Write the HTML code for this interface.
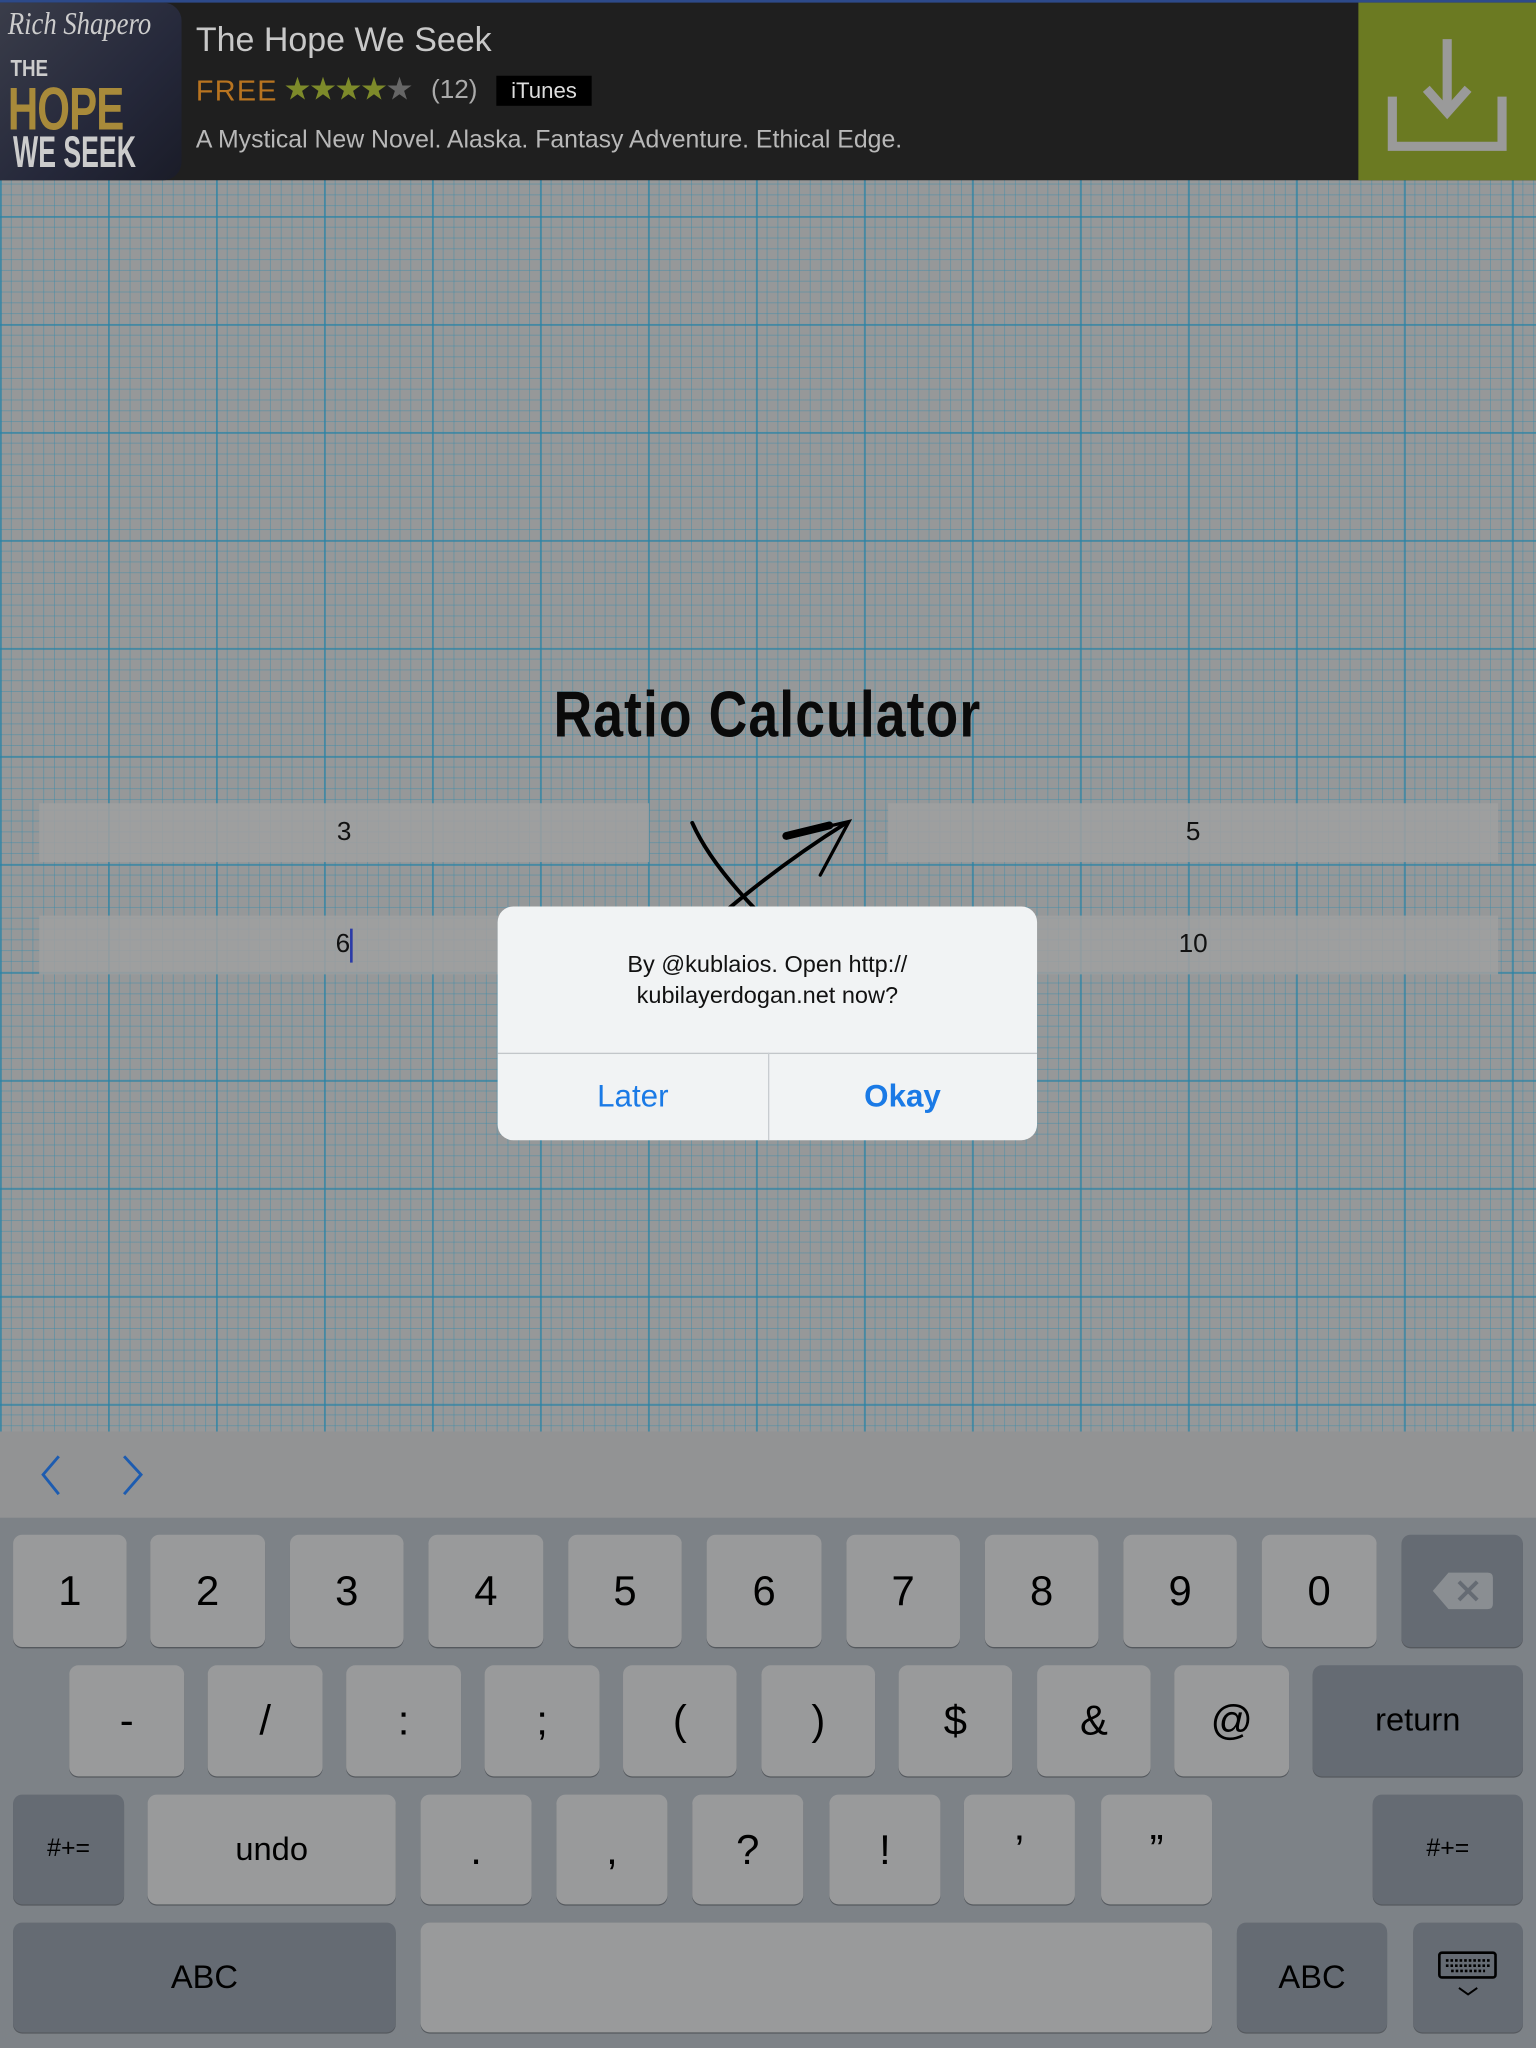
<!DOCTYPE html>
<html><head><meta charset="utf-8"><style>
html,body{margin:0;padding:0;width:1536px;height:2048px;overflow:hidden;background:#979797;font-family:"Liberation Sans",sans-serif}
#grid{position:absolute;left:0;top:0;width:1536px;height:1432px;
background-color:#969899;
background-image:
linear-gradient(to right,rgba(40,130,165,.6) 2px,transparent 2px),
linear-gradient(to bottom,rgba(40,130,165,.6) 2px,transparent 2px),
linear-gradient(to right,rgba(60,140,170,.45) 1px,transparent 1px),
linear-gradient(to bottom,rgba(60,140,170,.45) 1px,transparent 1px);
background-size:108px 108px,108px 108px,10.8px 10.8px,10.8px 10.8px;}
#s{position:absolute;left:0;top:0;width:1176px;height:1568px;transform:scale(1.306122);transform-origin:0 0}
.a{position:absolute}
.k{position:absolute;background:#999a9b;border-radius:7px;box-shadow:0 1px 0 #55595e;color:#000;display:flex;align-items:center;justify-content:center;font-size:32px}
.d{background:#656b73}
.inp{position:absolute;background:rgba(160,160,160,.85);text-align:center;font-size:20px;line-height:45px;color:#111}
</style></head><body>
<div id="grid"></div>
<div id="s">
<div class="a" style="left:0;top:0;width:1176px;height:138px;background:#1f1f1f;border-top:2px solid #2d4a8a;box-sizing:border-box"></div>
<div class="a" style="left:0;top:2px;width:139px;height:136px;background:linear-gradient(135deg,#3a3d4a,#25283a 60%,#1a1c28);border-radius:0 14px 14px 0;overflow:hidden">
<div class="a" style="left:6px;top:4px;font:italic 24px 'Liberation Serif',serif;color:#ccc;transform:scaleX(.85);transform-origin:0 0;white-space:nowrap">Rich Shapero</div>
<div class="a" style="left:8px;top:40px;font:bold 18px 'Liberation Sans';color:#ccc;transform:scaleX(.8);transform-origin:0 0">THE</div>
<div class="a" style="left:6px;top:54px;font:bold 46px 'Liberation Sans';color:#a88a3a;transform:scaleX(.7);transform-origin:0 0;letter-spacing:-1px;white-space:nowrap">HOPE</div>
<div class="a" style="left:10px;top:96px;font:bold 34px 'Liberation Sans';color:#ccc;transform:scaleX(.6);transform-origin:0 0;white-space:nowrap">WE SEEK</div>
</div>
<div class="a" style="left:150px;top:15px;font-size:26px;color:#c8c8c8">The Hope We Seek</div>
<div class="a" style="left:150px;top:57px;font-size:22px;color:#b87420;letter-spacing:1px">FREE</div>
<div class="a" style="left:217px;top:54px;font-size:24px;color:#7d8a2a;letter-spacing:-2px">★★★★<span style="color:#666">★</span></div>
<div class="a" style="left:330px;top:58px;font-size:20px;color:#aaa">(12)</div>
<div class="a" style="left:380px;top:58px;width:73px;height:23px;background:#000;color:#ddd;font-size:17px;text-align:center;line-height:23px">iTunes</div>
<div class="a" style="left:150px;top:97px;font-size:19px;color:#b8b8b8">A Mystical New Novel. Alaska. Fantasy Adventure. Ethical Edge.</div>
<div class="a" style="left:1040px;top:2px;width:136px;height:136px;background:#6b7a22">
<svg width="136" height="136" viewBox="0 0 136 136"><g fill="none" stroke="#9a9a9a" stroke-width="7"><path d="M68 28V80"/><path d="M52 66L68 84L84 66"/><path d="M26 72V110H110V72"/></g></svg></div>
<div class="a" style="left:380px;top:518px;width:415px;text-align:center;font:bold 50px 'Liberation Sans',sans-serif;color:#0a0a0a;transform:scaleX(.82);letter-spacing:1px">Ratio Calculator</div>
<div class="inp" style="left:30px;top:615px;width:467px">3</div>
<div class="inp" style="left:680px;top:615px;width:467px">5</div>
<div class="inp" style="left:30px;top:701px;width:467px">6<span style="display:inline-block;width:2px;height:26px;background:#2a3aa8;vertical-align:middle"></span></div>
<div class="inp" style="left:680px;top:701px;width:467px">10</div>
<svg class="a" style="left:520px;top:620px" width="140" height="120" viewBox="0 0 140 120"><g fill="none" stroke="#000" stroke-linecap="round"><path d="M10 10Q30 55 100 115" stroke-width="3"/><path d="M35 78Q80 40 128 10" stroke-width="3"/><path d="M82 20L130 9L108 50" stroke-width="2.5"/><path d="M82 20L115 12" stroke-width="6"/></g></svg>
<div class="a" style="left:381px;top:694px;width:413px;height:179px;background:#f1f3f4;border-radius:12px;overflow:hidden">
<div class="a" style="left:0;top:32px;width:413px;text-align:center;font-size:18px;line-height:24px;color:#111">By @kublaios. Open http://<br>kubilayerdogan.net now?</div>
<div class="a" style="left:0;top:112px;width:413px;height:1px;background:#c2c6c9"></div>
<div class="a" style="left:207px;top:112px;width:1px;height:67px;background:#c8ccd0"></div>
<div class="a" style="left:0;top:132px;width:207px;text-align:center;font-size:24px;color:#1a7ae6">Later</div>
<div class="a" style="left:207px;top:132px;width:206px;text-align:center;font-size:24px;font-weight:bold;color:#1a7ae6">Okay</div>
</div>
<div class="a" style="left:0;top:1096px;width:1176px;height:66px;background:#929394"></div>
<svg class="a" style="left:25px;top:1110px" width="100" height="40"><g fill="none" stroke="#1d5cb0" stroke-width="2.2"><path d="M20 5L8 19L20 34"/><path d="M70 5L83 19L70 34"/></g></svg>
<div class="a" style="left:0;top:1162px;width:1176px;height:406px;background:#7d8287"></div>
<div class="k" style="left:10px;top:1175px;width:87px;height:86px">1</div>
<div class="k" style="left:115px;top:1175px;width:88px;height:86px">2</div>
<div class="k" style="left:222px;top:1175px;width:87px;height:86px">3</div>
<div class="k" style="left:328px;top:1175px;width:88px;height:86px">4</div>
<div class="k" style="left:435px;top:1175px;width:87px;height:86px">5</div>
<div class="k" style="left:541px;top:1175px;width:88px;height:86px">6</div>
<div class="k" style="left:648px;top:1175px;width:87px;height:86px">7</div>
<div class="k" style="left:754px;top:1175px;width:87px;height:86px">8</div>
<div class="k" style="left:860px;top:1175px;width:87px;height:86px">9</div>
<div class="k" style="left:966px;top:1175px;width:88px;height:86px">0</div>
<div class="k d" style="left:1073px;top:1175px;width:93px;height:86px"><svg width="50" height="40" viewBox="0 0 50 40"><path d="M14 6H44Q48 6 48 10V30Q48 34 44 34H14L2 20Z" fill="#8a8e92"/><path d="M22 13L36 27M36 13L22 27" stroke="#656b73" stroke-width="3"/></svg></div>
<div class="k" style="left:53px;top:1275px;width:88px;height:85px">-</div>
<div class="k" style="left:159px;top:1275px;width:88px;height:85px">/</div>
<div class="k" style="left:265px;top:1275px;width:88px;height:85px">:</div>
<div class="k" style="left:371px;top:1275px;width:88px;height:85px">;</div>
<div class="k" style="left:477px;top:1275px;width:87px;height:85px">(</div>
<div class="k" style="left:583px;top:1275px;width:87px;height:85px">)</div>
<div class="k" style="left:688px;top:1275px;width:87px;height:85px">$</div>
<div class="k" style="left:794px;top:1275px;width:87px;height:85px">&amp;</div>
<div class="k" style="left:899px;top:1275px;width:88px;height:85px">@</div>
<div class="k d" style="left:1005px;top:1275px;width:161px;height:85px;font-size:25px">return</div>
<div class="k d" style="left:10px;top:1374px;width:85px;height:84px;font-size:19px">#+=</div>
<div class="k" style="left:113px;top:1374px;width:190px;height:84px;font-size:25px">undo</div>
<div class="k" style="left:322px;top:1374px;width:85px;height:84px">.</div>
<div class="k" style="left:426px;top:1374px;width:85px;height:84px">,</div>
<div class="k" style="left:530px;top:1374px;width:85px;height:84px">?</div>
<div class="k" style="left:635px;top:1374px;width:85px;height:84px">!</div>
<div class="k" style="left:738px;top:1374px;width:85px;height:84px">’</div>
<div class="k" style="left:843px;top:1374px;width:85px;height:84px">”</div>
<div class="k d" style="left:1051px;top:1374px;width:115px;height:84px;font-size:19px">#+=</div>
<div class="k d" style="left:10px;top:1472px;width:293px;height:84px;font-size:25px">ABC</div>
<div class="k" style="left:322px;top:1472px;width:606px;height:84px"></div>
<div class="k d" style="left:947px;top:1472px;width:115px;height:84px;font-size:25px">ABC</div>
<div class="k d" style="left:1082px;top:1472px;width:84px;height:84px"><svg width="50" height="44" viewBox="0 0 50 44"><rect x="3" y="3" width="43" height="19" rx="2" fill="none" stroke="#000" stroke-width="2"/><path d="M8 9H42M8 13H42M12 17H38" stroke="#000" stroke-width="2" stroke-dasharray="2 1.5"/><path d="M18 30L25 35L32 30" fill="none" stroke="#000" stroke-width="1.5"/></svg></div>
</div>
</body></html>
